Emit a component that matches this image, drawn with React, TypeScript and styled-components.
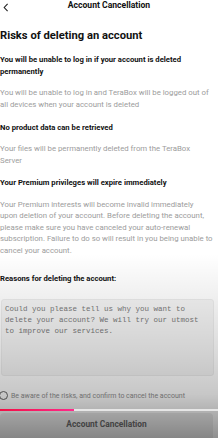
import React, { useState } from 'react';
import styled, { createGlobalStyle } from 'styled-components';

const GlobalStyle = createGlobalStyle`
  html, body {
    margin: 0;
    padding: 0;
    background: #ffffff;
  }
  body {
    font-family: Roboto, "Liberation Sans", Arial, sans-serif;
    -webkit-font-smoothing: antialiased;
  }
`;

const Screen = styled.div`
  position: relative;
  width: 218px;
  height: 438px;
  overflow: hidden;
  background: #ffffff;
  display: flex;
  flex-direction: column;
`;

// dark vignette over the lower part of the frame
const Shade = styled.div`
  position: absolute;
  inset: 0;
  z-index: 1;
  pointer-events: none;
  background: linear-gradient(
    to bottom,
    rgba(0, 0, 0, 0) 0%,
    rgba(0, 0, 0, 0) 58%,
    rgba(0, 0, 0, 0.05) 66%,
    rgba(0, 0, 0, 0.14) 80%,
    rgba(0, 0, 0, 0.22) 90%,
    rgba(0, 0, 0, 0.44) 100%
  );
`;

const TopBar = styled.header`
  position: relative;
  height: 14px;
  display: flex;
  align-items: center;
  justify-content: center;
`;

const BackButton = styled.button`
  position: absolute;
  left: 2px;
  top: 1px;
  border: none;
  background: none;
  padding: 0;
  width: 8px;
  height: 12px;
  display: flex;
  align-items: center;
  justify-content: center;
  cursor: pointer;
`;

const TopTitle = styled.h1`
  margin: 0;
  font-size: 8.6px;
  font-weight: 700;
  color: #111;
`;

const Content = styled.main`
  padding: 0 4px 0 0;
  display: flex;
  flex-direction: column;
`;

const PageTitle = styled.h2`
  margin: 19px 0 0;
  font-size: 11.2px;
  line-height: 14px;
  font-weight: 700;
  color: #111;
`;

const Section = styled.section`
  margin-top: 11px;
  display: flex;
  flex-direction: column;
`;

const RiskTitle = styled.h3`
  margin: 0;
  font-size: 7.7px;
  line-height: 11.5px;
  font-weight: 700;
  color: #111;
`;

const RiskText = styled.p`
  margin: 10px 0 0;
  font-size: 7.8px;
  line-height: 11.6px;
  color: #9c9c9c;
`;

const Line = styled.span`
  display: block;
  white-space: nowrap;
`;

const ReasonLabel = styled.h3`
  margin: 16px 0 0;
  font-size: 7.7px;
  line-height: 11.5px;
  font-weight: 700;
  color: #111;
`;

const ReasonBox = styled.textarea`
  margin: 15px 0 0 1px;
  height: 77px;
  box-sizing: border-box;
  resize: none;
  border: 1px solid #ececec;
  border-radius: 3px;
  background: #f5f5f5;
  padding: 4px 3px;
  font-family: "Liberation Mono", "DejaVu Sans Mono", monospace;
  font-size: 7.5px;
  line-height: 11px;
  color: #555;
  outline: none;

  &::placeholder {
    color: #7a7a7a;
  }
`;

const ConfirmRow = styled.label`
  margin-top: 15px;
  display: flex;
  align-items: center;
  gap: 3px;
  font-size: 7px;
  color: #909090;
  cursor: pointer;
`;

const Radio = styled.span<{ checked: boolean }>`
  width: 7px;
  height: 7px;
  margin-left: -1px;
  border-radius: 50%;
  border: 1px solid #666;
  background: ${({ checked }) => (checked ? '#ee1f5c' : 'transparent')};
  flex-shrink: 0;
`;

// playback scrubber, drawn above the vignette
const Progress = styled.div`
  position: relative;
  z-index: 2;
  margin-top: 9px;
  height: 3px;
  background: #e6e6e6;
  display: flex;
`;

const ProgressFill = styled.div`
  height: 100%;
  background: linear-gradient(to right, #f20f45, #ff2a8a);
`;

const SubmitButton = styled.button`
  margin: 2px 5px 0 0;
  height: 32px;
  border: none;
  border-radius: 4px 4px 0 0;
  background: #eeeeee;
  font-family: inherit;
  font-size: 8.4px;
  font-weight: 700;
  color: #6a6a6a;
  padding: 0 0 4px;
`;

const risks = [
  {
    title: ['You will be unable to log in if your account is deleted', 'permanently'],
    text: [
      'You will be unable to log in and TeraBox will be logged out of',
      'all devices when your account is deleted',
    ],
  },
  {
    title: ['No product data can be retrieved'],
    text: ['Your files will be permanently deleted from the TeraBox', 'Server'],
  },
  {
    title: ['Your Premium privileges will expire immediately'],
    text: [
      'Your Premium interests will become invalid immediately',
      'upon deletion of your account. Before deleting the account,',
      'please make sure you have canceled your auto-renewal',
      'subscription. Failure to do so will result in you being unable to',
      'cancel your account.',
    ],
  },
];

const App: React.FC = () => {
  const [agreed, setAgreed] = useState(false);
  const progress = 34;

  return (
    <>
      <GlobalStyle />
      <Screen>
        <TopBar>
          <BackButton aria-label="Back">
            <svg width="6" height="9" viewBox="0 0 6 9" fill="none">
              <path d="M4.6 0.8L1.2 4.5L4.6 8.2" stroke="#222" strokeWidth="1.1" />
            </svg>
          </BackButton>
          <TopTitle>Account Cancellation</TopTitle>
        </TopBar>

        <Content>
          <PageTitle>Risks of deleting an account</PageTitle>

          {risks.map((risk) => (
            <Section key={risk.title[0]}>
              <RiskTitle>
                {risk.title.map((l) => (
                  <Line key={l}>{l}</Line>
                ))}
              </RiskTitle>
              <RiskText>
                {risk.text.map((l) => (
                  <Line key={l}>{l}</Line>
                ))}
              </RiskText>
            </Section>
          ))}

          <ReasonLabel>Reasons for deleting the account:</ReasonLabel>
          <ReasonBox placeholder="Could you please tell us why you want to delete your account? We will try our utmost to improve our services." />

          <ConfirmRow onClick={() => setAgreed(!agreed)}>
            <Radio checked={agreed} />
            Be aware of the risks, and confirm to cancel the account
          </ConfirmRow>
        </Content>

        <Progress>
          <ProgressFill style={{ width: `${progress}%` }} />
        </Progress>
        <SubmitButton>Account Cancellation</SubmitButton>

        <Shade />
      </Screen>
    </>
  );
};

export default App;
